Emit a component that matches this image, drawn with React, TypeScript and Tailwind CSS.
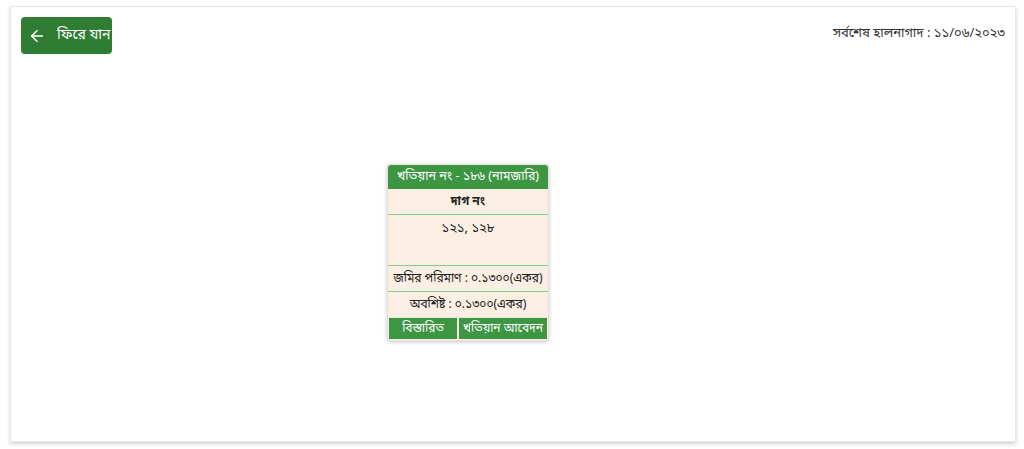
import { ArrowLeft } from "lucide-react"

const font = { fontFamily: '"Noto Sans Bengali", "Noto Sans", "Liberation Sans", sans-serif' }

export default function App() {
  return (
    <div className="w-[1024px] h-[449px] bg-white pt-[6px] pl-[10px]" style={font}>
      <div className="w-[1006px] h-[436px] bg-white border border-gray-200 shadow-[0_2px_4px_rgba(0,0,0,0.18)] px-[10px] pt-[10px] flex flex-col">
        <div className="flex items-start justify-between">
          <button className="h-[37px] w-[91px] rounded-[4px] bg-[#2e7d32] text-white flex items-center gap-[11px] pl-[7px] text-[14px]">
            <ArrowLeft className="w-[18px] h-[18px]" strokeWidth={2.25} />
            <span className="font-normal">ফিরে যান</span>
          </button>
          <div className="text-[13px] text-[#333] mt-[7px]">সর্বশেষ হালনাগাদ : ১১/০৬/২০২৩</div>
        </div>
        <div className="flex justify-center mt-[110px] pr-[90px]">
          <div className="w-[162px] rounded-[4px] bg-[#fbefe4] border border-[#e6e0da] shadow-[0_1px_4px_rgba(0,0,0,0.22)] text-[12px] text-[#222] text-center overflow-hidden">
            <div className="h-[24px] bg-[#3c9642] text-white text-[12.5px] flex items-center justify-center">খতিয়ান নং - ১৮৬ (নামজারি)</div>
            <div className="h-[26px] flex items-center justify-center font-bold border-b border-[#86cc8a]">দাগ নং</div>
            <div className="h-[51px] pt-[4px] text-[13px] border-b border-[#86cc8a]">১২১, ১২৮</div>
            <div className="h-[26px] flex items-center justify-center border-b border-[#86cc8a]">জমির পরিমাণ : ০.১৩০০(একর)</div>
            <div className="h-[26px] flex items-center justify-center border-b border-[#dfe9dc]">অবশিষ্ট : ০.১৩০০(একর)</div>
            <div className="flex gap-[2px] px-[1px] pb-[1px]">
              <button className="h-[21px] w-[68px] bg-[#3c9642] text-white text-[12px]">বিস্তারিত</button>
              <button className="h-[21px] flex-1 bg-[#3c9642] text-white text-[12px]">খতিয়ান আবেদন</button>
            </div>
          </div>
        </div>
      </div>
    </div>
  )
}
